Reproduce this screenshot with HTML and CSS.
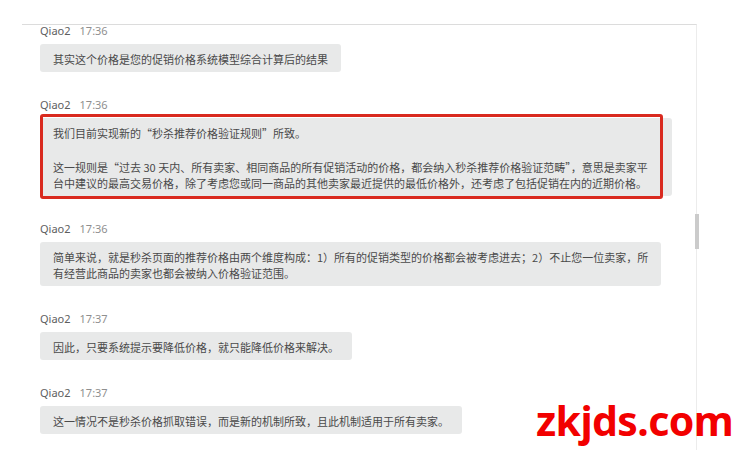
FILE: index.html
```html
<!DOCTYPE html>
<html lang="zh-CN">
<head>
  <meta charset="UTF-8" />
  <meta name="viewport" content="width=device-width, initial-scale=1.0"/>
  <title>聊天记录</title>
  <link rel="stylesheet" href="styles.css">
</head>
<body>

  <div class="chat-panel">
    <div class="msg">
      <div class="msg-meta"><span class="msg-name">Qiao2</span><span class="msg-time">17:36</span></div>
      <div class="bubble">其实这个价格是您的促销价格系统模型综合计算后的结果</div>
    </div>

    <div class="msg">
      <div class="msg-meta"><span class="msg-name">Qiao2</span><span class="msg-time">17:36</span></div>
      <div class="bubble bubble-marked">
        <p>我们目前实现新的“秒杀推荐价格验证规则”所致。</p>
        <p>这一规则是“过去 30 天内、所有卖家、相同商品的所有促销活动的价格，都会纳入秒杀推荐价格验证范畴”，意思是卖家平<br>台中建议的最高交易价格，除了考虑您或同一商品的其他卖家最近提供的最低价格外，还考虑了包括促销在内的近期价格。</p>
      </div>
    </div>

    <div class="msg">
      <div class="msg-meta"><span class="msg-name">Qiao2</span><span class="msg-time">17:36</span></div>
      <div class="bubble">简单来说，就是秒杀页面的推荐价格由两个维度构成：1）所有的促销类型的价格都会被考虑进去；2）不止您一位卖家，所<br>有经营此商品的卖家也都会被纳入价格验证范围。</div>
    </div>

    <div class="msg">
      <div class="msg-meta"><span class="msg-name">Qiao2</span><span class="msg-time">17:37</span></div>
      <div class="bubble">因此，只要系统提示要降低价格，就只能降低价格来解决。</div>
    </div>

    <div class="msg">
      <div class="msg-meta"><span class="msg-name">Qiao2</span><span class="msg-time">17:37</span></div>
      <div class="bubble">这一情况不是秒杀价格抓取错误，而是新的机制所致，且此机制适用于所有卖家。</div>
    </div>

    <div class="scroll-thumb"></div>
  </div>

  <div class="watermark">zkjds.com</div>

</body>
</html>
```

FILE: styles.css
```css
body {
  margin: 0;
  background-color: #fff;
  font-family: "Noto Sans", "Noto Sans CJK SC", sans-serif;
  position: relative;
  height: 460px;
  overflow: hidden;
}

.chat-panel {
  position: relative;
  margin: 24px 0 0 22px;
  width: 675px;
  height: 426px;
  border-top: 1px solid #dcdcdc;
  border-right: 1px solid #ececec;
  padding-left: 18px;
  box-sizing: border-box;
}

.msg {
  margin-bottom: 27px;
}

.msg-meta {
  font-size: 11px;
  line-height: 14px;
  height: 14px;
  margin-bottom: 6px;
  margin-top: -1px;
}

.msg-name {
  color: #5e5e5e;
  margin-right: 9px;
}

.msg-time {
  color: #8f8f8f;
}

.bubble {
  display: inline-block;
  max-width: 632px;
  box-sizing: border-box;
  padding: 6.5px 13px 5.5px;
  background-color: #e8e9e9;
  border-radius: 3px;
  color: #4a4a4a;
  font-family: "Noto Sans CJK SC", sans-serif;
  font-size: 11px;
  line-height: 16px;
  white-space: nowrap;
}

.bubble p {
  margin: 0;
}

.bubble p + p {
  margin-top: 18px;
}

.bubble-marked {
  position: relative;
  width: 632px;
}

.bubble-marked::after {
  content: "";
  position: absolute;
  top: -4px;
  left: 0;
  right: 9px;
  bottom: -3px;
  border: 3px solid #d92a1f;
  border-radius: 3px;
}

.scroll-thumb {
  position: absolute;
  right: -3px;
  top: 189px;
  width: 4px;
  height: 35px;
  background-color: #cbcbcb;
}

.watermark {
  position: absolute;
  left: 536px;
  top: 392px;
  color: #f20000;
  font-family: "Noto Sans", sans-serif;
  font-weight: 700;
  font-size: 41px;
  line-height: 56px;
  letter-spacing: -0.6px;
}
```
